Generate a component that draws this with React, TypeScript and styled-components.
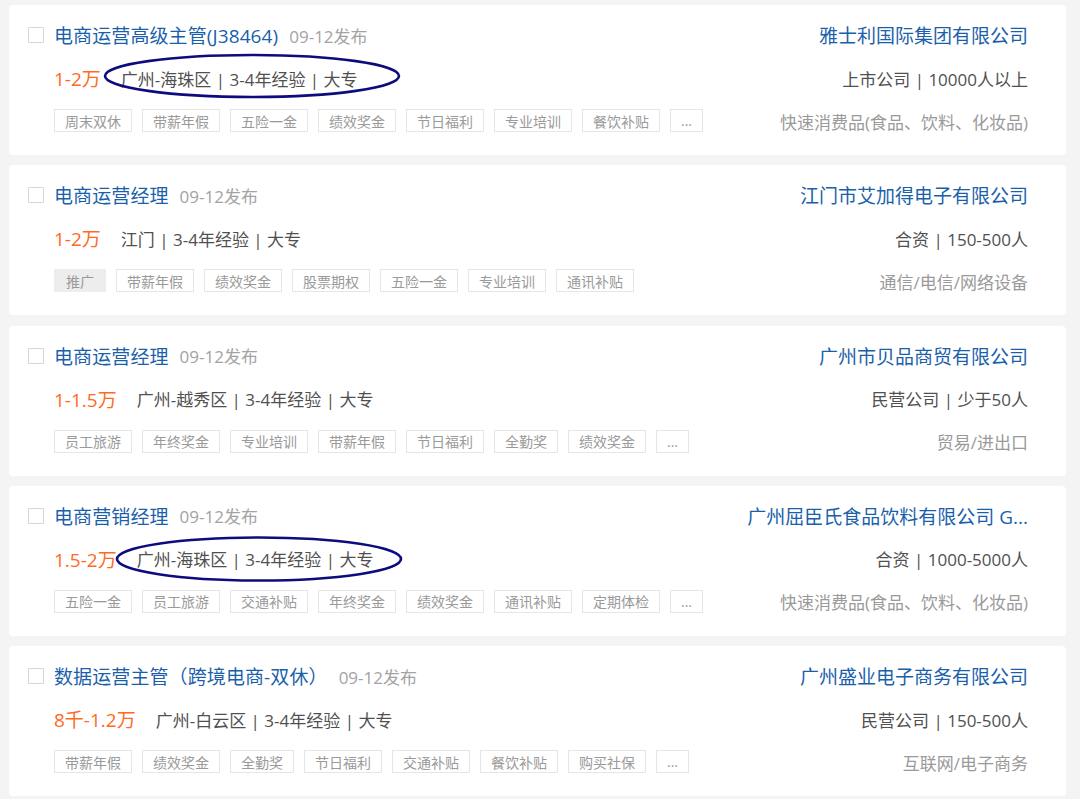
import React from "react";
import styled, { createGlobalStyle } from "styled-components";

const GlobalStyle = createGlobalStyle`
  html, body { margin: 0; padding: 0; background: #f4f4f4; }
  body { font-family: "Open Sans", "Noto Sans CJK SC", sans-serif; }
  * { box-sizing: border-box; }
`;

const Page = styled.div`
  display: flex;
  flex-direction: column;
  gap: 10.25px;
  padding: 5px 14px 0 9px;
`;

const Card = styled.div`
  position: relative;
  display: flex;
  height: 150px;
  padding: 18px 38px 0 19px;
  background: #fff;
  border-radius: 4px;
`;

const CheckBox = styled.span`
  flex: none;
  width: 16px;
  height: 16px;
  margin: 4px 10px 0 0;
  border: 1px solid #d6d6d6;
  border-radius: 1px;
  background: #fff;
`;

const Main = styled.div`
  flex: 1;
  display: flex;
  flex-direction: column;
  gap: 19px;
  min-width: 0;
`;

const Side = styled.div`
  flex: none;
  display: flex;
  flex-direction: column;
  align-items: flex-end;
  gap: 19px;
`;

const Row = styled.div`
  display: flex;
  align-items: center;
  height: 24px;
  white-space: nowrap;
`;

const Title = styled.span`
  font-size: 19px;
  color: #1b5fab;
  letter-spacing: 0.1px;
`;

const Date = styled.span`
  margin-left: 11px;
  font-size: 17px;
  color: #a3a3a3;
`;

const Salary = styled.span`
  font-size: 19px;
  color: #ff6a1f;
`;

const Info = styled.span`
  margin-left: 20px;
  font-size: 17px;
  color: #505050;
`;

const Tags = styled.div`
  display: flex;
  gap: 10px;
  height: 23px;
`;

const Tag = styled.span<{ $promo?: boolean }>`
  display: flex;
  align-items: center;
  height: 23px;
  padding: 0 ${(p) => (p.$promo ? "11px" : "10px")};
  font-size: 14px;
  color: #9a9a9a;
  background: ${(p) => (p.$promo ? "#ededed" : "#fff")};
  border: 1px solid ${(p) => (p.$promo ? "#ededed" : "#e6e6e6")};
`;

const Company = styled.span`
  font-size: 19px;
  color: #1b5fab;
`;

const Scale = styled.span`
  font-size: 17px;
  color: #505050;
`;

const Industry = styled.span`
  font-size: 17px;
  color: #9a9a9a;
`;

const Mark = styled.svg`
  position: absolute;
  left: 0;
  top: 0;
  overflow: visible;
  pointer-events: none;
`;

type Job = {
  title: string;
  salary: string;
  info: string;
  tags: string[];
  promo?: boolean;
  company: string;
  scale: string;
  industry: string;
  mark?: { cx: number; cy: number; rx: number; ry: number };
};

const jobs: Job[] = [
  {
    title: "电商运营高级主管(J38464)",
    salary: "1-2万",
    info: "广州-海珠区 | 3-4年经验 | 大专",
    tags: ["周末双休", "带薪年假", "五险一金", "绩效奖金", "节日福利", "专业培训", "餐饮补贴", "..."],
    company: "雅士利国际集团有限公司",
    scale: "上市公司 | 10000人以上",
    industry: "快速消费品(食品、饮料、化妆品)",
    mark: { cx: 243, cy: 71, rx: 147, ry: 21 },
  },
  {
    title: "电商运营经理",
    salary: "1-2万",
    info: "江门 | 3-4年经验 | 大专",
    promo: true,
    tags: ["推广", "带薪年假", "绩效奖金", "股票期权", "五险一金", "专业培训", "通讯补贴"],
    company: "江门市艾加得电子有限公司",
    scale: "合资 | 150-500人",
    industry: "通信/电信/网络设备",
  },
  {
    title: "电商运营经理",
    salary: "1-1.5万",
    info: "广州-越秀区 | 3-4年经验 | 大专",
    tags: ["员工旅游", "年终奖金", "专业培训", "带薪年假", "节日福利", "全勤奖", "绩效奖金", "..."],
    company: "广州市贝品商贸有限公司",
    scale: "民营公司 | 少于50人",
    industry: "贸易/进出口",
  },
  {
    title: "电商营销经理",
    salary: "1.5-2万",
    info: "广州-海珠区 | 3-4年经验 | 大专",
    tags: ["五险一金", "员工旅游", "交通补贴", "年终奖金", "绩效奖金", "通讯补贴", "定期体检", "..."],
    company: "广州屈臣氏食品饮料有限公司 G...",
    scale: "合资 | 1000-5000人",
    industry: "快速消费品(食品、饮料、化妆品)",
    mark: { cx: 250, cy: 73, rx: 142, ry: 21.5 },
  },
  {
    title: "数据运营主管（跨境电商-双休）",
    salary: "8千-1.2万",
    info: "广州-白云区 | 3-4年经验 | 大专",
    tags: ["带薪年假", "绩效奖金", "全勤奖", "节日福利", "交通补贴", "餐饮补贴", "购买社保", "..."],
    company: "广州盛业电子商务有限公司",
    scale: "民营公司 | 150-500人",
    industry: "互联网/电子商务",
  },
];

export default function App() {
  return (
    <>
      <GlobalStyle />
      <Page>
        {jobs.map((job, i) => (
          <Card key={i}>
            <CheckBox />
            <Main>
              <Row>
                <Title>{job.title}</Title>
                <Date>09-12发布</Date>
              </Row>
              <Row>
                <Salary>{job.salary}</Salary>
                <Info>{job.info}</Info>
              </Row>
              <Tags>
                {job.tags.map((t, j) => (
                  <Tag key={j} $promo={job.promo && j === 0}>
                    {t}
                  </Tag>
                ))}
              </Tags>
            </Main>
            <Side>
              <Row>
                <Company>{job.company}</Company>
              </Row>
              <Row>
                <Scale>{job.scale}</Scale>
              </Row>
              <Row>
                <Industry>{job.industry}</Industry>
              </Row>
            </Side>
            {job.mark && (
              <Mark width="1" height="1">
                <ellipse
                  cx={job.mark.cx}
                  cy={job.mark.cy}
                  rx={job.mark.rx}
                  ry={job.mark.ry}
                  fill="none"
                  stroke="#0c0c7e"
                  strokeWidth="2.6"
                />
              </Mark>
            )}
          </Card>
        ))}
      </Page>
    </>
  );
}
